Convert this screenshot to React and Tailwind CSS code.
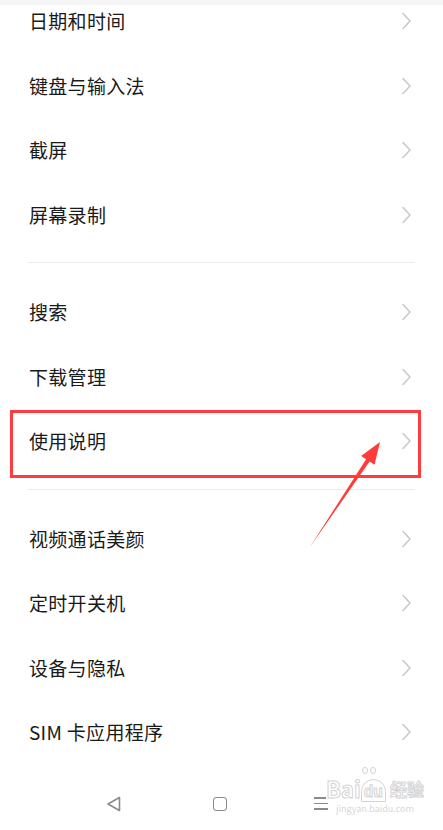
const groups = [
  ['日期和时间', '键盘与输入法', '截屏', '屏幕录制'],
  ['搜索', '下载管理', '使用说明'],
  ['视频通话美颜', '定时开关机', '设备与隐私', 'SIM 卡应用程序'],
];

function Chevron() {
  return (
    <svg width="11" height="18" viewBox="0 0 11 18" className="shrink-0">
      <path d="M2 1.5 L9 9 L2 16.5" fill="none" stroke="#c9c9c9" strokeWidth="1.6" strokeLinecap="round" strokeLinejoin="round" />
    </svg>
  );
}

function Row({ label, highlight }) {
  return (
    <div className="relative flex h-[64.5px] items-center justify-between pl-[29px] pr-[31px]">
      <span className="text-[19px] text-[#1a1a1a] tracking-[0.3px]">{label}</span>
      <Chevron />
      {highlight && (
        <div className="pointer-events-none absolute left-[10px] right-[22px] top-[1px] bottom-[-4px] border-[3px] border-[#ff3b3b]" />
      )}
    </div>
  );
}

export default function App() {
  return (
    <div
      className="relative h-[830px] w-[443px] overflow-hidden bg-white"
      style={{ fontFamily: '"Noto Sans CJK SC", "Noto Sans", sans-serif' }}
    >
      <div className="h-[5px] bg-[#f6f6f6]" />
      <div className="-mt-[16px]">
        {groups.map((g, gi) => (
          <div key={gi}>
            {gi > 0 && (
              <div className="mx-[28px] mt-[15px] mb-[17px] h-px bg-[#ebebeb]" />
            )}
            {g.map((label) => (
              <Row key={label} label={label} highlight={label === '使用说明'} />
            ))}
          </div>
        ))}
      </div>

      {/* nav bar */}
      <div className="mt-[19px] flex h-[40px] items-center">
        <div className="flex w-full items-center pl-[106px]">
          <svg width="16" height="16" viewBox="0 0 16 16">
            <path d="M13.5 1.5 L2 8 L13.5 14.5 Z" fill="none" stroke="#8a8a8a" strokeWidth="1.6" strokeLinejoin="round" />
          </svg>
          <div className="ml-[91px] h-[14px] w-[14px] rounded-[3px] border-[1.6px] border-[#8a8a8a]" />
          <div className="ml-[87px] flex flex-col gap-[4px]">
            <div className="h-[1.6px] w-[12px] bg-[#8a8a8a]" />
            <div className="h-[1.6px] w-[14px] bg-[#8a8a8a]" />
            <div className="h-[1.6px] w-[14px] bg-[#8a8a8a]" />
          </div>
        </div>
      </div>

      {/* annotation arrow */}
      <svg className="pointer-events-none absolute left-0 top-0" width="443" height="830">
        <polygon
          points="380,442 374.5,464.7 369.6,461.4 310,547 366.1,459.2 361.1,455.9"
          fill="#ff3b3b"
        />
      </svg>

      {/* watermark */}
      <div className="pointer-events-none absolute left-[326px] top-[776px] flex flex-col items-center">
        <div className="flex items-end text-[22px] font-bold leading-[22px] text-white" style={{ WebkitTextStroke: '1px #d4d4d4' }}>
          <span>Bai</span>
          <span className="relative">
            <span className="absolute -top-[9px] left-[1px] flex gap-[2px]">
              <span className="h-[7px] w-[6px] rounded-full border border-[#d4d4d4]" />
              <span className="h-[7px] w-[6px] rounded-full border border-[#d4d4d4]" />
            </span>
            <span className="rounded-t-full border border-[#d4d4d4] px-[2px] text-[15px] leading-[17px]">du</span>
          </span>
          <span className="ml-[4px] text-[17px] leading-[20px]">经验</span>
        </div>
        <div className="mt-[5px] text-[9px] leading-[10px] text-[#d8d8d8]">jingyan.baidu.com</div>
      </div>
    </div>
  );
}
